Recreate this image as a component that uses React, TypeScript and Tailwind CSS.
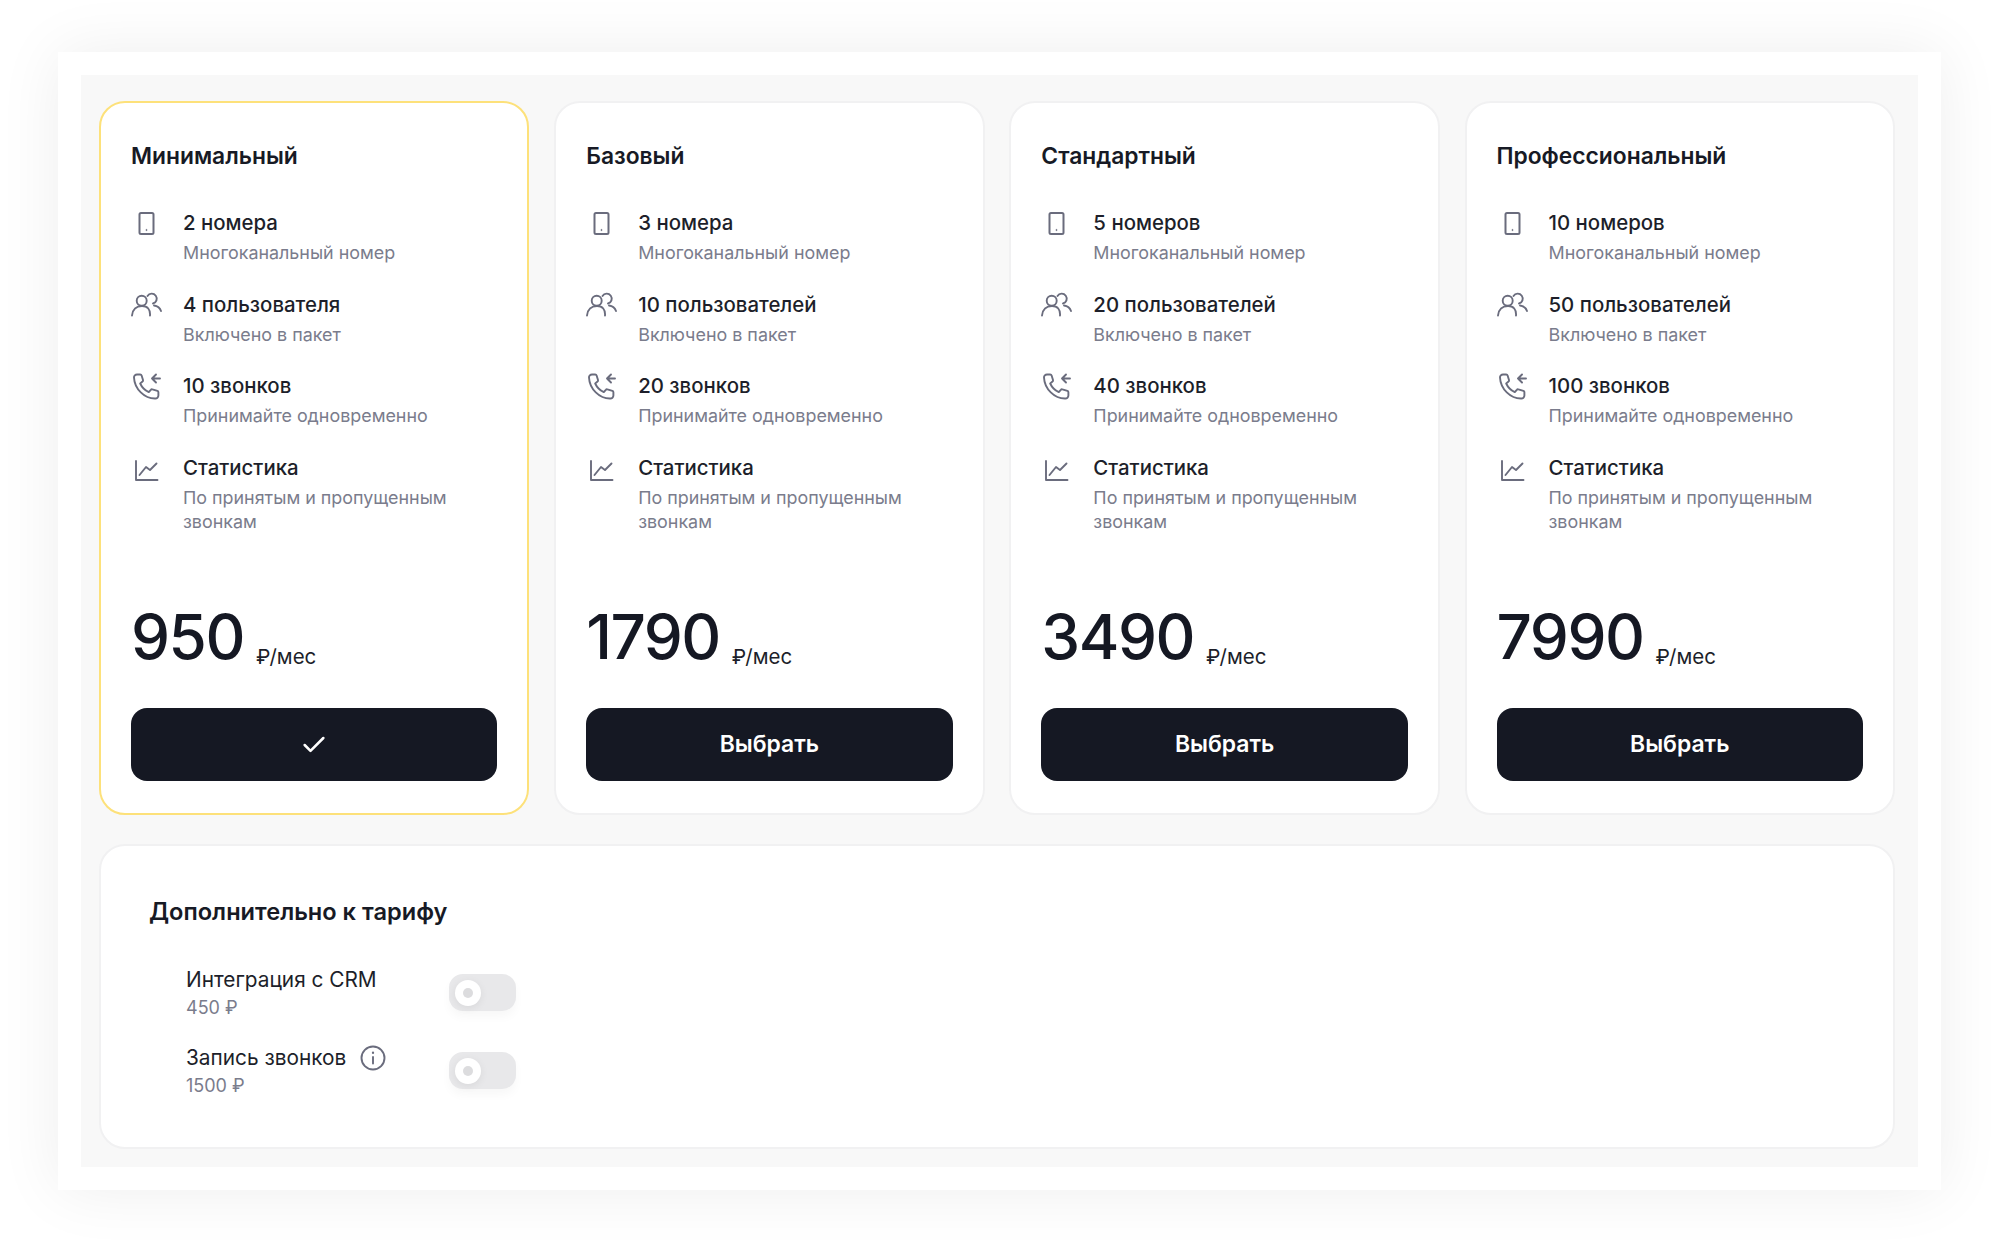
import type { ReactNode } from "react";
import { Check } from "lucide-react";

const PhoneIcon = () => (
    <svg width="32" height="32" viewBox="0 0 32 32" fill="none" stroke="#6a6c7d" strokeWidth="2">
        <rect x="8.5" y="6" width="14" height="21" rx="1.5" />
        <circle cx="15.5" cy="23" r="0.6" fill="#6a6c7d" strokeWidth="0.8" />
    </svg>
);

const UsersIcon = () => (
    <svg width="32" height="32" viewBox="0 0 32 32" fill="none" stroke="#6a6c7d" strokeWidth="1.9" strokeLinecap="round">
        <g transform="translate(-1 -1)">
            <circle cx="11.7" cy="12.7" r="5" />
            <path d="M2 27.5c.5-6 4.500-9.500 10-9.500s8.500 3.500 8 9.500" />
            <path d="M17.5 8a5 5 0 1 1 5.500 7.500" />
            <path d="M24 17.5c3.500.5 6 2.500 7 5.500" />
        </g>
    </svg>
);

const CallsIcon = () => (
    <svg width="32" height="32" viewBox="0 0 32 32" fill="none" stroke="#6a6c7d" strokeWidth="1.9" strokeLinecap="round" strokeLinejoin="round">
        <g transform="translate(0 1)">
            <path d="M6 3.5h3.200c.7 0 1.200.4 1.400 1l1.400 4.500c.2.600 0 1.200-.5 1.600l-2.300 1.900c1.800 4 4.700 6.900 8.600 8.600l2-2.300c.4-.5 1-.7 1.600-.5l5 1.500c.6.200 1 .7 1 1.400v3.300c0 1.800-1.500 3.100-3.200 3C13.500 27.700 3.500 18 3 6.500c-.1-1.600 1.300-3 3-3z" />
            <path d="M29 7.500h-8M25 3.500l-4 4 4 4" />
        </g>
    </svg>
);

const ChartIcon = () => (
    <svg width="32" height="32" viewBox="0 0 32 32" fill="none" stroke="#6a6c7d" strokeWidth="1.9" strokeLinecap="round" strokeLinejoin="round">
        <path d="M5 9v19h21.5" />
        <path d="M8.5 23l6.500-8 4 3 6.500-6.500" />
    </svg>
);

const InfoIcon = () => (
    <svg width="26" height="26" viewBox="0 0 26 26" fill="none" stroke="#6a6c7d" strokeWidth="1.9" strokeLinecap="round">
        <circle cx="13" cy="13" r="11.5" />
        <path d="M13 12v6.500" />
        <path d="M13 7.5v.5" strokeWidth="2.2" />
    </svg>
);

const Feature = ({ icon, title, sub }: { icon: ReactNode; title: string; sub: string }) => (
    <div className="flex gap-5">
        <div className="w-8 h-7 shrink-0 flex items-center justify-center">{icon}</div>
        <div className="min-w-0">
            <div className="text-[20.4px] leading-7 font-medium text-[#1d1f2a]">{title}</div>
            <div className="mt-1 text-[17.9px] leading-6 text-[#7a7c8c]">{sub}</div>
        </div>
    </div>
);

interface PlanProps {
    name: string;
    numbers: string;
    users: string;
    calls: string;
    price: string;
    active?: boolean;
}

const PlanCard = ({ name, numbers, users, calls, price, active = false }: PlanProps) => (
    <div className={`flex flex-col rounded-[26px] border-2 bg-white px-[30px] pt-[39px] pb-[31.5px] ${active ? "border-[#fde17a]" : "border-[#f1f1f2]"}`}>
        <div className="text-[22.8px] leading-7 font-semibold text-[#171a25]">{name}</div>
        <div className="mt-[39px] flex flex-col gap-[25.6px]">
            <Feature icon={<PhoneIcon />} title={numbers} sub="Многоканальный номер" />
            <Feature icon={<UsersIcon />} title={users} sub="Включено в пакет" />
            <Feature icon={<CallsIcon />} title={calls} sub="Принимайте одновременно" />
            <Feature icon={<ChartIcon />} title="Статистика" sub="По принятым и пропущенным звонкам" />
        </div>
        <div className="mt-[67.5px] flex items-end gap-[12px]">
            <span className="text-[62px] leading-[72px] font-medium text-[#151823] tracking-[-1.5px]">{price}</span>
            <span className="mb-[2px] text-[20.5px] leading-7 text-[#1d1f2a]">₽/мес</span>
        </div>
        <button className="mt-[34.5px] h-[73.5px] w-full rounded-2xl bg-[#151823] text-[22.9px] font-semibold text-white flex items-center justify-center">
            {active ? <Check size={28} strokeWidth={2.2} /> : "Выбрать"}
        </button>
    </div>
);

const Toggle = () => (
    <div className="h-[37px] w-[67px] rounded-[14px] bg-[#e8e8ea] shadow-[0_6px_10px_rgba(0,0,0,0.03)] flex items-center pl-[6px]">
        <div className="w-[26px] h-[26px] rounded-full bg-white flex items-center justify-center shadow-[0_2px_8px_rgba(0,0,0,0.07)]">
            <div className="w-[10px] h-[10px] rounded-full bg-[#dcdcde]" />
        </div>
    </div>
);

const Addon = ({ title, price, info = false }: { title: string; price: string; info?: boolean }) => (
    <div className="flex items-center">
        <div className="w-[263px]">
            <div className="flex items-center gap-[14px] text-[20.8px] leading-7 text-[#1d1f2a]">
                {title}
                {info && <InfoIcon />}
            </div>
            <div className="mt-[2px] text-[18px] leading-6 text-[#7a7c8c]">{price}</div>
        </div>
        <Toggle />
    </div>
);

const App = () => (
    <div className="font-['Inter','Noto_Sans',sans-serif] h-[1255px] w-full bg-white pt-[52px] pl-[58px] pr-[58px] overflow-hidden">
        <div className="h-[1138px] bg-white p-[23px] shadow-[0_0_60px_rgba(0,0,0,0.07)]">
            <div className="h-full bg-[#f8f8f8] pt-[26px] pl-[18px] pr-[23px]">
                <div className="grid grid-cols-4 gap-[24.7px]">
                    <PlanCard name="Минимальный" numbers="2 номера" users="4 пользователя" calls="10 звонков" price="950" active />
                    <PlanCard name="Базовый" numbers="3 номера" users="10 пользователей" calls="20 звонков" price="1790" />
                    <PlanCard name="Стандартный" numbers="5 номеров" users="20 пользователей" calls="40 звонков" price="3490" />
                    <PlanCard name="Профессиональный" numbers="10 номеров" users="50 пользователей" calls="100 звонков" price="7990" />
                </div>
                <div className="mt-[29px] h-[305px] rounded-[26px] border-2 border-[#f1f1f2] bg-white pt-[52px] pl-[48px]">
                    <div className="text-[23.6px] leading-7 font-semibold text-[#171a25]">Дополнительно к тарифу</div>
                    <div className="mt-[40px] ml-[37px] flex flex-col gap-[24px]">
                        <Addon title="Интеграция с CRM" price="450 ₽" />
                        <Addon title="Запись звонков" price="1500 ₽" info />
                    </div>
                </div>
            </div>
        </div>
    </div>
);

export default App;
